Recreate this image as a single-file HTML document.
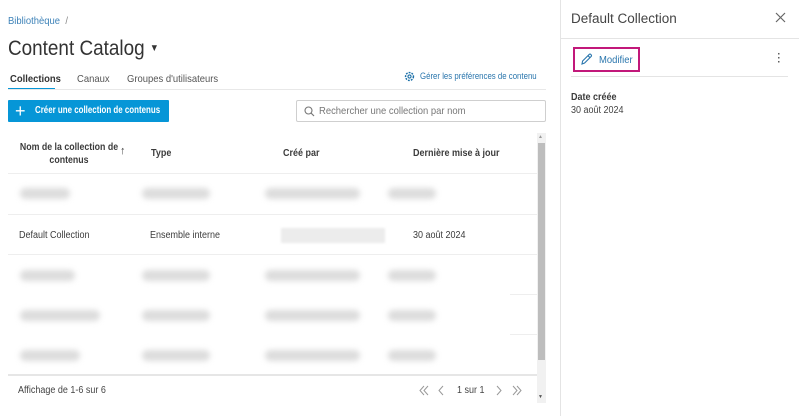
<!DOCTYPE html>
<html><head><meta charset="utf-8"><style>
*{box-sizing:border-box;margin:0;padding:0}
body{width:799px;height:416px;overflow:hidden;background:#fff;font-family:"Liberation Sans",sans-serif;color:#3c3c3c;position:relative}
.a{position:absolute;white-space:nowrap}
.c{transform:scaleX(.9);transform-origin:left center}
.bl{position:absolute;height:11px;background:#dcdcdc;border-radius:6px;filter:blur(3px)}
.ln{position:absolute;height:1px;background:#eeeeee}
</style></head><body>
<div class="a c" style="left:8px;top:15px;font-size:10.5px;color:#3d82b8">Bibliothèque <span style="color:#888;margin-left:3px">/</span></div>
<div class="a c" style="left:8px;top:37px;font-size:21px;color:#333">Content Catalog <span style="font-size:10px;vertical-align:4px">▼</span></div>
<div class="a c" style="left:10px;top:73px;font-size:10.5px;font-weight:bold;color:#333">Collections</div>
<div class="a c" style="left:77px;top:73px;font-size:10.5px;color:#555">Canaux</div>
<div class="a c" style="left:127px;top:73px;font-size:10.5px;color:#555">Groupes d'utilisateurs</div>
<div style="position:absolute;left:8px;top:88px;width:47px;height:2px;background:#0696d7"></div>
<div class="ln" style="left:8px;top:89px;width:538px;background:#e8e8e8"></div>
<svg class="a" style="left:404px;top:71px" width="11" height="11" viewBox="0 0 12 12"><circle cx="6" cy="6" r="4.3" fill="none" stroke="#1a6fa8" stroke-width="1.6" stroke-dasharray="2 1.2"/><circle cx="6" cy="6" r="1.7" fill="none" stroke="#1a6fa8" stroke-width="1.2"/></svg>
<div class="a c" style="left:420px;top:71px;font-size:9px;color:#2a76ad;transform:scaleX(.87)">Gérer les préférences de contenu</div>
<div class="a" style="left:8px;top:100px;width:161px;height:22px;background:#0696d7;border-radius:1px"></div>
<div class="a c" style="left:35px;top:100px;color:#fff;font-size:10.3px;font-weight:bold;line-height:22px;transform:scaleX(.77)">Créer une collection de contenus</div>
<div class="a" style="left:15px;top:101px;color:#fff;font-size:18px;line-height:20px">+</div>
<div class="a" style="left:296px;top:100px;width:250px;height:22px;border:1px solid #cfcfcf;border-radius:2px"></div>
<svg class="a" style="left:304px;top:106px" width="11" height="11" viewBox="0 0 11 11"><circle cx="4.5" cy="4.5" r="3.5" fill="none" stroke="#777" stroke-width="1.1"/><path d="M7 7l3 3" stroke="#777" stroke-width="1.2"/></svg>
<div class="a c" style="left:319px;top:105px;font-size:10.5px;color:#777">Rechercher une collection par nom</div>
<div class="a" style="left:12px;top:141px;font-size:10px;font-weight:bold;color:#3c3c3c;text-align:center;line-height:13px;white-space:normal;width:114px;transform:scaleX(.88)">Nom de la collection de contenus</div>
<div class="a" style="left:120px;top:145px;font-size:11px;color:#444">↑</div>
<div class="a c" style="left:151px;top:148px;font-size:10px;font-weight:bold">Type</div>
<div class="a c" style="left:283px;top:148px;font-size:10px;font-weight:bold">Créé par</div>
<div class="a c" style="left:413px;top:148px;font-size:10px;font-weight:bold">Dernière mise à jour</div>
<div class="ln" style="left:8px;top:173px;width:529px"></div>
<div class="ln" style="left:8px;top:214px;width:529px"></div>
<div class="ln" style="left:8px;top:254px;width:529px"></div>
<div class="ln" style="left:510px;top:294px;width:27px"></div>
<div class="ln" style="left:510px;top:334px;width:27px"></div>
<div class="ln" style="left:8px;top:374px;width:529px;background:#e6e6e6;height:2px"></div>
<div class="bl" style="left:20px;top:188px;width:50px"></div><div class="bl" style="left:142px;top:188px;width:68px"></div><div class="bl" style="left:265px;top:188px;width:95px"></div><div class="bl" style="left:388px;top:188px;width:48px"></div>
<div class="a c" style="left:19px;top:230px;font-size:10px;color:#3c3c3c">Default Collection</div>
<div class="a c" style="left:150px;top:230px;font-size:10px;color:#3c3c3c">Ensemble interne</div>
<div class="a" style="left:281px;top:228px;width:104px;height:15px;background:#ececec;filter:blur(1px)"></div>
<div class="a c" style="left:413px;top:230px;font-size:10px;color:#3c3c3c">30 août 2024</div>
<div class="bl" style="left:20px;top:270px;width:55px"></div><div class="bl" style="left:142px;top:270px;width:68px"></div><div class="bl" style="left:265px;top:270px;width:95px"></div><div class="bl" style="left:388px;top:270px;width:48px"></div>
<div class="bl" style="left:20px;top:310px;width:80px"></div><div class="bl" style="left:142px;top:310px;width:68px"></div><div class="bl" style="left:265px;top:310px;width:95px"></div><div class="bl" style="left:388px;top:310px;width:48px"></div>
<div class="bl" style="left:20px;top:350px;width:60px"></div><div class="bl" style="left:142px;top:350px;width:68px"></div><div class="bl" style="left:265px;top:350px;width:95px"></div><div class="bl" style="left:388px;top:350px;width:48px"></div>
<div class="a" style="left:537px;top:133px;width:9px;height:270px;background:#f1f1f1"></div>
<div class="a" style="left:538px;top:143px;width:7px;height:217px;background:#bdbdbd"></div>
<div class="a" style="left:538px;top:134px;font-size:5px;color:#999">▲</div>
<div class="a" style="left:538px;top:394px;font-size:5px;color:#555">▼</div>
<div class="a c" style="left:18px;top:385px;font-size:10px;color:#444">Affichage de 1-6 sur 6</div>
<svg class="a" style="left:418px;top:385px" width="105" height="11" viewBox="0 0 105 11"><g fill="none" stroke="#999" stroke-width="1"><path d="M6 1L2 5.5 6 10M10 1L6 5.5 10 10M25 1L21 5.5 25 10M79 1L83 5.5 79 10M95 1L99 5.5 95 10M99 1L103 5.5 99 10"/></g></svg>
<div class="a c" style="left:457px;top:385px;font-size:10px;color:#444">1 sur 1</div>
<div class="a" style="left:560px;top:0;width:1px;height:416px;background:#e4e4e4"></div>
<div class="a" style="left:571px;top:11px;font-size:13.5px;color:#444">Default Collection</div>
<svg class="a" style="left:775px;top:12px" width="11" height="11" viewBox="0 0 11 11"><path d="M1 1l9 9M10 1l-9 9" stroke="#666" stroke-width="1.2"/></svg>
<div class="a" style="left:561px;top:38px;width:238px;height:1px;background:#e4e4e4"></div>
<div class="a" style="left:573px;top:47px;width:67px;height:25px;border:2px solid #c2187a"></div>
<svg class="a" style="left:580px;top:53px" width="13" height="13" viewBox="0 0 13 13"><path d="M2 11l.6-3L9 1.6a1.3 1.3 0 0 1 2 2L4.6 10 2 11zM8 2.7l2 2" fill="none" stroke="#2a76ad" stroke-width="1.1"/></svg>
<div class="a c" style="left:599px;top:54px;font-size:10.5px;color:#2a76ad">Modifier</div>
<div class="a" style="left:777px;top:53px;font-size:10px;color:#555;line-height:4px;width:4px;text-align:center;font-weight:bold">·<br>·<br>·</div>
<div class="a" style="left:571px;top:76px;width:217px;height:1px;background:#e4e4e4"></div>
<div class="a c" style="left:571px;top:92px;font-size:10px;font-weight:bold;color:#3c3c3c">Date créée</div>
<div class="a c" style="left:571px;top:105px;font-size:10px;color:#444">30 août 2024</div>
</body></html>
